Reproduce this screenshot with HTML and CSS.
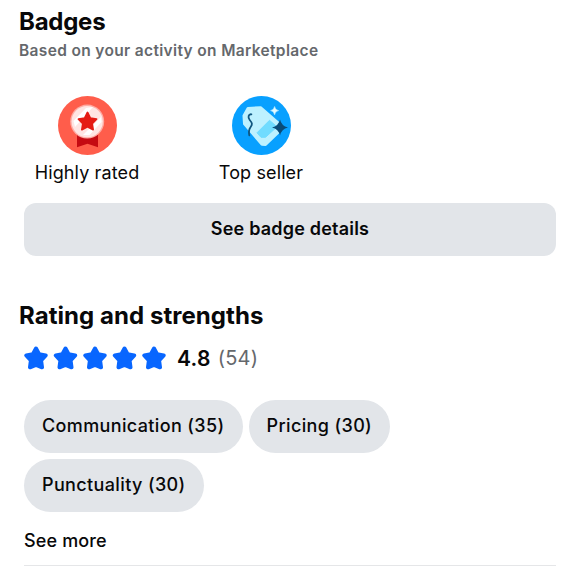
FILE: index.html
```html
<!DOCTYPE html>
<html lang="en">
<head>
    <meta charset="UTF-8">
    <meta name="viewport" content="width=device-width, initial-scale=1.0">
    <title>Badges and ratings</title>
    <link rel="stylesheet" href="styles.css">
</head>
<body>
    <section class="badges">
        <h2>Badges</h2>
        <p class="subtitle">Based on your activity on Marketplace</p>
        <div class="badge-list">
            <div class="badge">
                <svg class="badge-icon" viewBox="0 0 59 59">
                    <circle cx="29.5" cy="29.5" r="29.5" fill="#ff5d4b"/>
                    <path d="M19 39h21v12.3l-10.5-3.6L19 51.3z" fill="#c50a12"/>
                    <circle cx="29.2" cy="25.6" r="17" fill="#ffaba3"/>
                    <circle cx="29.2" cy="25.6" r="15.6" fill="#ffe5e3"/>
                    <path d="M15.5 25L28 12l7-1-18 20zM25 39l18-18 .5 5-12 13z" fill="#fff"/>
                    <path d="M29.5 16.5l2.800 5.600 6.200 1-4.400 4.400 1 6.100-5.600-2.800-5.600 2.800 1-6.100-4.400-4.400 6.200-1z" fill="#e51b14" stroke="#e51b14" stroke-width="1.8" stroke-linejoin="round"/>
                </svg>
                <span>Highly rated</span>
            </div>
            <div class="badge">
                <svg class="badge-icon" viewBox="0 0 59 59">
                    <circle cx="29.5" cy="29.5" r="29.5" fill="#08a0ff"/>
                    <path d="M16 12.5l12.5-.8 18 15.8-.5 9-12.5 12-3.500-.2-17.500-20.500-.5-8z" fill="#bdf1ff" stroke="#bdf1ff" stroke-width="3" stroke-linejoin="round"/>
                    <path d="M37.5 24.300l7.500 6.500-11.500 10.500h-4.500l-4-4.500z" fill="#70dcff" stroke="#70dcff" stroke-linejoin="round"/>
                    <path d="M19.400 18.300c-3-.4-3.800 3.300-1.700 5.700 2.600 3 3 4.400.8 7.200-1.800 2.500-1.800 5.300-1.200 8.200" fill="none" stroke="#10567f" stroke-width="1.8" stroke-linecap="round"/>
                    <path d="M42.600 10.500q.8 3.700 4 4.100-3.200.4-4 4.200-.8-3.800-4-4.200 3.200-.4 4-4.100z" fill="#e2faff" stroke="#e2faff" stroke-width=".5"/>
                    <path d="M48 23.500q1.500 6.500 8 8-6.500 1.500-8 8-1.500-6.500-8-8 6.500-1.500 8-8z" fill="#0a4b77"/>
                </svg>
                <span>Top seller</span>
            </div>
        </div>
        <button class="details-btn">See badge details</button>
    </section>

    <section class="ratings">
        <h2 class="ratings-title">Rating and strengths</h2>
        <div class="rating-row">
            <svg class="stars" viewBox="0 0 142 24">
                <defs>
                    <path id="star" d="M12 2.500l3.100 5.800 6.600 1.100-4.600 5 .9 6.900L12 19 6 21.300l.9-6.900-4.600-5 6.600-1.100z" stroke-width="4" stroke-linejoin="round"/>
                </defs>
                <use href="#star" x="0"/>
                <use href="#star" x="29.5"/>
                <use href="#star" x="59"/>
                <use href="#star" x="88.5"/>
                <use href="#star" x="118"/>
            </svg>
            <span class="score">4.8</span>
            <span class="count">(54)</span>
        </div>
        <div class="chips">
            <span class="chip">Communication (35)</span>
            <span class="chip">Pricing (30)</span>
            <span class="chip">Punctuality (30)</span>
        </div>
        <div class="see-more">See more</div>
    </section>
</body>
</html>
```

FILE: styles.css
```css
body {
    font-family: Inter, sans-serif;
    margin: 0;
    padding: 7px 24px 0;
    background-color: #ffffff;
    color: #080809;
}

h2 {
    margin: 0 0 0 -5px;
    font-size: 24px;
    line-height: 30px;
    font-weight: 700;
    letter-spacing: -0.25px;
}

.subtitle {
    margin: 4px 0 0 -5px;
    font-size: 15.5px;
    line-height: 20px;
    font-weight: 600;
    letter-spacing: 0.34px;
    color: #65686c;
}

.badge-list {
    display: flex;
    margin-top: 35px;
    margin-left: -24px;
}

.badge {
    width: 174px;
    display: flex;
    flex-direction: column;
    align-items: center;
    font-size: 18px;
    line-height: 24px;
    letter-spacing: 0.12px;
}

.badge-icon {
    width: 59px;
    height: 59px;
    margin-bottom: 6px;
}

.details-btn {
    display: block;
    width: 100%;
    height: 52.5px;
    margin-top: 18px;
    padding: 0 0 2px;
    border: none;
    border-radius: 12px;
    background-color: #e2e5e9;
    color: #080809;
    font-family: inherit;
    font-size: 18px;
    font-weight: 600;
    letter-spacing: 0.2px;
    cursor: pointer;
}

.ratings {
    margin-top: 45.5px;
}

.ratings-title {
    letter-spacing: 0.05px;
}

.rating-row {
    display: flex;
    align-items: center;
    height: 26px;
    margin-top: 14px;
    font-size: 20px;
}

.stars {
    width: 142px;
    height: 24px;
    fill: #0866ff;
    stroke: #0866ff;
}

.score {
    margin-left: 11px;
    font-weight: 600;
    font-size: 21px;
    letter-spacing: 0.3px;
}

.count {
    margin-left: 7px;
    color: #65686c;
    letter-spacing: 0.2px;
}

.chips {
    display: flex;
    flex-wrap: wrap;
    gap: 6.5px 6px;
    margin-top: 29px;
}

.chip {
    height: 52.5px;
    line-height: 51px;
    padding: 0 18px;
    border-radius: 27px;
    background-color: #e2e5e9;
    font-size: 18px;
    font-weight: 500;
    letter-spacing: 0.37px;
}

.see-more {
    padding: 16.5px 0 12px;
    border-bottom: 1px solid #e5e6e8;
    font-size: 18px;
    font-weight: 450;
    line-height: 25px;
    letter-spacing: 0.15px;
}
```
